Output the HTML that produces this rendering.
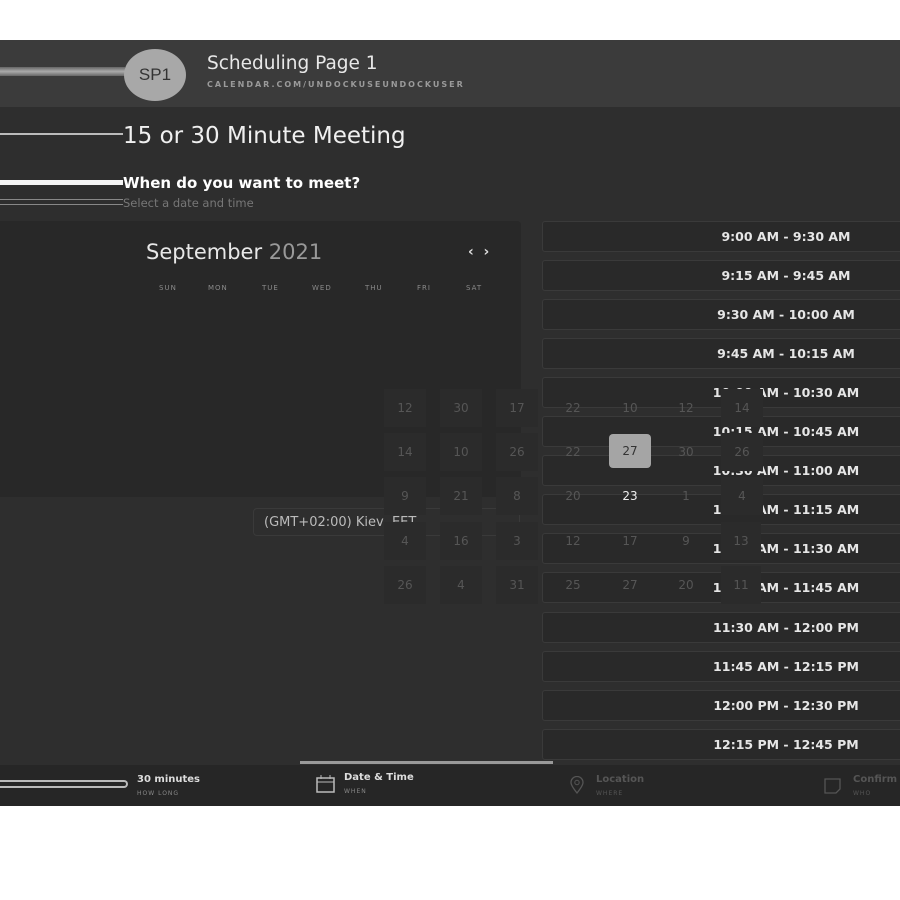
<!DOCTYPE html>
<html><head><meta charset="utf-8"><style>
*{margin:0;padding:0;box-sizing:border-box}
body{width:900px;height:900px;background:#fff;position:relative;overflow:hidden;font-family:"DejaVu Sans",sans-serif}
.a{position:absolute}
#app{left:0;top:40px;width:900px;height:766px;background:#2e2e2e}
#hdr{left:0;top:40px;width:900px;height:67px;background:#3b3b3b}
.slot{position:absolute;left:542px;width:370px;height:31px;border:1px solid #3a3a3a;border-radius:3px;background:#292929;color:#e6e6e6;font-size:12.5px;font-weight:bold;text-align:center;padding-left:118px;line-height:29px}
.n{position:absolute;width:42px;height:38px;line-height:38px;text-align:center;color:#565656;font-size:12px}
.bg{background:#2b2b2b}
.dow{position:absolute;top:284px;font-size:7px;color:#8a8a8a;letter-spacing:1px}
</style></head><body>
<div class="a" id="app"></div>
<div class="a" id="hdr"></div>
<div class="a" style="left:0;top:67px;width:125px;height:9px;background:linear-gradient(#666,#aaa,#666)"></div>
<div class="a" style="left:124px;top:49px;width:62px;height:52px;border-radius:50%;background:#a8a8a8;color:#333;font-size:17px;text-align:center;line-height:52px;font-family:'Liberation Sans',sans-serif">SP1</div>
<div class="a" style="left:207px;top:53px;color:#e8e8e8;font-size:18.5px">Scheduling Page 1</div>
<div class="a" style="left:207px;top:80px;color:#9a9a9a;font-size:8px;font-weight:bold;letter-spacing:2px">CALENDAR.COM/UNDOCKUSEUNDOCKUSER</div>
<div class="a" style="left:0;top:133px;width:123px;height:2px;background:#bbb"></div>
<div class="a" style="left:123px;top:123px;color:#f0f0f0;font-size:23px">15 or 30 Minute Meeting</div>
<div class="a" style="left:0;top:180px;width:123px;height:5px;background:#f5f5f5"></div>
<div class="a" style="left:123px;top:174px;color:#fff;font-size:15px;font-weight:bold">When do you want to meet?</div>
<div class="a" style="left:0;top:199px;width:123px;height:6px;border-top:1px solid #888;border-bottom:1px solid #888"></div>
<div class="a" style="left:123px;top:196px;color:#777;font-size:11.5px">Select a date and time</div>
<div class="a" style="left:0;top:221px;width:521px;height:276px;background:#282828;border-radius:0 4px 4px 0"></div>
<div class="a" style="left:146px;top:240px;color:#e8e8e8;font-size:21px">September <span style="color:#999">2021</span></div>
<div class="a" style="left:468px;top:244px;color:#ddd;font-size:14px;font-weight:bold">‹ &nbsp;›</div>
<div class="dow" style="left:159px">SUN</div><div class="dow" style="left:208px">MON</div><div class="dow" style="left:262px">TUE</div><div class="dow" style="left:312px">WED</div><div class="dow" style="left:365px">THU</div><div class="dow" style="left:417px">FRI</div><div class="dow" style="left:466px">SAT</div>
<div class="a" style="left:253px;top:508px;width:267px;height:28px;border:1px solid #3a3a3a;border-radius:4px;color:#bbb;font-size:13px;padding:6px 10px">(GMT+02:00) Kiev, EET</div>

<div class="slot" style="top:221px">9:00 AM - 9:30 AM</div>
<div class="slot" style="top:260px">9:15 AM - 9:45 AM</div>
<div class="slot" style="top:299px">9:30 AM - 10:00 AM</div>
<div class="slot" style="top:338px">9:45 AM - 10:15 AM</div>
<div class="slot" style="top:377px">10:00 AM - 10:30 AM</div>
<div class="slot" style="top:416px">10:15 AM - 10:45 AM</div>
<div class="slot" style="top:455px">10:30 AM - 11:00 AM</div>
<div class="slot" style="top:494px">10:45 AM - 11:15 AM</div>
<div class="slot" style="top:533px">11:00 AM - 11:30 AM</div>
<div class="slot" style="top:572px">11:15 AM - 11:45 AM</div>
<div class="slot" style="top:612px">11:30 AM - 12:00 PM</div>
<div class="slot" style="top:651px">11:45 AM - 12:15 PM</div>
<div class="slot" style="top:690px">12:00 PM - 12:30 PM</div>
<div class="slot" style="top:729px">12:15 PM - 12:45 PM</div>

<div class="n bg" style="left:384px;top:389px">12</div><div class="n bg" style="left:440px;top:389px">30</div><div class="n bg" style="left:496px;top:389px">17</div><div class="n" style="left:552px;top:389px">22</div><div class="n" style="left:609px;top:389px">10</div><div class="n" style="left:665px;top:389px">12</div><div class="n bg" style="left:721px;top:389px">14</div>
<div class="n bg" style="left:384px;top:433px">14</div><div class="n bg" style="left:440px;top:433px">10</div><div class="n bg" style="left:496px;top:433px">26</div><div class="n" style="left:552px;top:433px">22</div><div class="n" style="left:609px;top:434px;width:42px;height:34px;line-height:34px;background:#a5a5a5;color:#333;border-radius:4px">27</div><div class="n" style="left:665px;top:433px">30</div><div class="n bg" style="left:721px;top:433px">26</div>
<div class="n bg" style="left:384px;top:477px">9</div><div class="n bg" style="left:440px;top:477px">21</div><div class="n bg" style="left:496px;top:477px">8</div><div class="n" style="left:552px;top:477px">20</div><div class="n" style="left:609px;top:477px;color:#eee">23</div><div class="n" style="left:665px;top:477px">1</div><div class="n bg" style="left:721px;top:477px">4</div>
<div class="n bg" style="left:384px;top:522px">4</div><div class="n bg" style="left:440px;top:522px">16</div><div class="n bg" style="left:496px;top:522px">3</div><div class="n" style="left:552px;top:522px">12</div><div class="n" style="left:609px;top:522px">17</div><div class="n" style="left:665px;top:522px">9</div><div class="n bg" style="left:721px;top:522px;width:40px">13</div>
<div class="n bg" style="left:384px;top:566px">26</div><div class="n bg" style="left:440px;top:566px">4</div><div class="n bg" style="left:496px;top:566px">31</div><div class="n" style="left:552px;top:566px">25</div><div class="n" style="left:609px;top:566px">27</div><div class="n" style="left:665px;top:566px">20</div><div class="n bg" style="left:721px;top:566px;width:40px">11</div>

<div class="a" style="left:0;top:765px;width:900px;height:41px;background:#262626"></div>
<div class="a" style="left:300px;top:761px;width:253px;height:3px;background:#999"></div>
<div class="a" style="left:0;top:780px;width:128px;height:8px;border:2px solid #bbb;border-left:none;border-radius:0 4px 4px 0"></div>
<div class="a" style="left:137px;top:774px;color:#ddd;font-size:10px;font-weight:bold">30 minutes</div>
<div class="a" style="left:137px;top:790px;color:#888;font-size:6px;letter-spacing:1px">HOW LONG</div>
<svg class="a" style="left:316px;top:775px" width="20" height="18" viewBox="0 0 20 18"><rect x="1" y="3" width="17" height="14" fill="none" stroke="#bbb" stroke-width="1.5"/><line x1="1" y1="7" x2="18" y2="7" stroke="#bbb"/><line x1="5" y1="0" x2="5" y2="4" stroke="#bbb"/><line x1="14" y1="0" x2="14" y2="4" stroke="#bbb"/></svg>
<div class="a" style="left:344px;top:772px;color:#ddd;font-size:10px;font-weight:bold">Date &amp; Time</div>
<div class="a" style="left:344px;top:788px;color:#888;font-size:6px;letter-spacing:1px">WHEN</div>
<svg class="a" style="left:570px;top:776px" width="14" height="18" viewBox="0 0 14 18"><path d="M7 17C3 12 1 9 1 6.5A6 6 0 0 1 13 6.5C13 9 11 12 7 17Z" fill="none" stroke="#555" stroke-width="1.3"/><circle cx="7" cy="6.5" r="2.2" fill="none" stroke="#555"/></svg>
<div class="a" style="left:596px;top:774px;color:#555;font-size:10px;font-weight:bold">Location</div>
<div class="a" style="left:596px;top:790px;color:#555;font-size:6px;letter-spacing:1px">WHERE</div>
<svg class="a" style="left:824px;top:778px" width="17" height="16" viewBox="0 0 17 16"><path d="M1 1H16V11L12 15H1Z" fill="none" stroke="#555" stroke-width="1.3"/></svg>
<div class="a" style="left:853px;top:774px;color:#555;font-size:10px;font-weight:bold">Confirm</div>
<div class="a" style="left:853px;top:790px;color:#555;font-size:6px;letter-spacing:1px">WHO</div>
</body></html>
